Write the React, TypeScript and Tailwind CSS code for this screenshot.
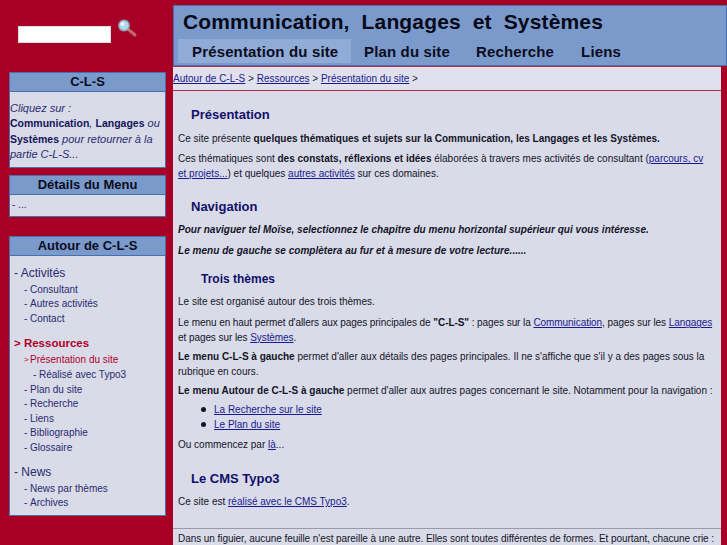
const F = "font-['Liberation_Sans',Arial,sans-serif]";

function SideBox({ title, children, className = "" }: { title: string; children: React.ReactNode; className?: string }) {
  return (
    <div className={`border border-[#4a6fae] bg-[#d9dbe8] ${className}`}>
      <div className="h-[19px] border-b border-[#4a6fae] bg-[#7a9acb] text-center text-[13px] leading-[18px] font-bold text-[#0c0c20]">{title}</div>
      {children}
    </div>
  );
}

function L1({ children, active }: { children: React.ReactNode; active?: boolean }) {
  return <div className={`mb-[2px] pl-1 leading-[16px] ${active ? "text-[11.5px] font-bold text-[#b0002a]" : "text-[12px] text-[#2a2a70]"}`}>{active ? ">" : "-"} {children}</div>;
}
function L2({ children, active, nested }: { children: React.ReactNode; active?: boolean; nested?: boolean }) {
  return (
    <div className={`flex text-[10px] leading-[14.6px] ${nested ? "pl-[23px]" : "pl-[14px]"} ${active ? "text-[#b0002a]" : "text-[#2a2a70]"}`}>
      <span className={`w-[6px] shrink-0 ${active ? "text-[8px]" : ""}`}>{active ? ">" : "-"}</span>
      <span>{children}</span>
    </div>
  );
}
function A({ children }: { children: React.ReactNode }) {
  return <a className="text-[#1a1a90] underline">{children}</a>;
}
function H({ children, className = "" }: { children: React.ReactNode; className?: string }) {
  return <h2 className={`pl-[13px] text-[13px] leading-[16px] font-bold text-[#10106a] ${className}`}>{children}</h2>;
}
function P({ children, className = "" }: { children: React.ReactNode; className?: string }) {
  return <p className={`text-[10px] leading-[14.4px] text-[#141428] ${className}`}>{children}</p>;
}
function Li({ children }: { children: React.ReactNode }) {
  return (
    <li className="flex h-[15px] items-center pl-[23px]">
      <span className="mr-[8px] h-[5px] w-[5px] shrink-0 rounded-full bg-[#141428]" />
      <span>{children}</span>
    </li>
  );
}

export default function App() {
  return (
    <div className={`${F} flex h-[545px] w-[727px] overflow-hidden bg-[#a80024]`}>
      <aside className="flex w-[173px] shrink-0 flex-col pt-[17px] pl-[9px] pr-[7px]">
        <div className="relative h-[55px]">
          <div className="ml-[9px] mt-[9px] h-[17px] w-[93px] border border-[#d9dbe8] bg-white" />
          <svg className="absolute left-[108px] top-[2px]" width="22" height="20" viewBox="0 0 22 20">
            <path d="M11.5 10.5 L18 16" stroke="#c06a70" strokeWidth="3" strokeLinecap="round" />
            <circle cx="7" cy="6.5" r="5.2" fill="#b4d6ea" stroke="#8aa8c6" strokeWidth="1.4" />
            <circle cx="5.5" cy="5" r="2" fill="#eef7fd" />
          </svg>
        </div>
        <SideBox title="C-L-S">
          <div className="pt-[9px] pb-[4px] text-[11px] leading-[15.4px] whitespace-nowrap text-[#2a2a70] italic">
            Cliquez sur :<br />
            <b className="text-[10.5px] not-italic text-[#14145a]">Communication</b>, <b className="text-[10.5px] not-italic text-[#14145a]">Langages</b> ou<br />
            <b className="text-[10.5px] not-italic text-[#14145a]">Systèmes</b> pour retourner à la<br />
            partie C-L-S...
          </div>
        </SideBox>
        <SideBox title="Détails du Menu" className="mt-[7px]">
          <div className="h-[21px] px-[2px] pt-[2px] text-[10px] leading-[15px] text-[#2a2a70]">- ...</div>
        </SideBox>
        <SideBox title="Autour de C-L-S" className="mt-[19px]">
          <div className="pt-[9px] pb-[4px]">
            <L1>Activités</L1>
            <L2>Consultant</L2>
            <L2>Autres activités</L2>
            <L2>Contact</L2>
            <div className="h-[9px]" />
            <L1 active>Ressources</L1>
            <L2 active>Présentation du site</L2>
            <L2 nested>Réalisé avec Typo3</L2>
            <L2>Plan du site</L2>
            <L2>Recherche</L2>
            <L2>Liens</L2>
            <L2>Bibliographie</L2>
            <L2>Glossaire</L2>
            <div className="h-[8px]" />
            <L1>News</L1>
            <L2>News par thèmes</L2>
            <L2>Archives</L2>
          </div>
        </SideBox>
      </aside>
      <main className="flex min-w-0 flex-1 flex-col pt-[5px]">
        <header className="h-[61px] border border-[#4a6fae] bg-[#7a9acb] pl-[4px]">
          <div className="h-[32px] pl-[5px] pt-[2px] text-[21px] leading-[28px] font-bold tracking-[0.15px] whitespace-pre text-[#080818]">Communication,  Langages  et  Systèmes</div>
          <nav className="flex h-[25px] pt-px text-[15px] leading-[25px] font-bold tracking-[0.15px] text-[#0c0c20]">
            <div className="w-[173px] bg-[#8fabd6] pl-[14px]">Présentation du site</div>
            <div className="ml-[13px]">Plan du site</div>
            <div className="ml-[26px]">Recherche</div>
            <div className="ml-[27px]">Liens</div>
          </nav>
        </header>
        <div className="mr-[6px] h-[25px] border-y border-[#b03050] bg-[#e0e1ec] text-[10px] leading-[23px] text-[#222240]">
          <A>Autour de C-L-S</A> &gt; <A>Ressources</A> &gt; <A>Présentation du site</A> &gt;
        </div>
        <div className="mr-[6px] h-[437px] bg-[#d9dbe8] pl-[5px] pr-[4px] pt-[16px]">
          <H>Présentation</H>
          <P className="mt-[9px]">Ce site présente <b>quelques thématiques et sujets sur la Communication, les Langages et les Systèmes.</b></P>
          <P className="mt-[6px]">Ces thématiques sont <b>des constats, réflexions et idées</b> élaborées à travers mes activités de consultant (<A>parcours, cv<br />et projets...</A>) et quelques <A>autres activités</A> sur ces domaines.</P>
          <H className="mt-[18px]">Navigation</H>
          <P className="mt-[8px] font-bold tracking-[0.03px] italic">Pour naviguer tel Moïse, selectionnez le chapitre du menu horizontal supérieur qui vous intéresse.</P>
          <P className="mt-[6px] font-bold tracking-[0.03px] italic">Le menu de gauche se complètera au fur et à mesure de votre lecture......</P>
          <h3 className="mt-[13px] pl-[23px] text-[12px] leading-[16px] font-bold text-[#10106a]">Trois thèmes</h3>
          <P className="mt-[8px]">Le site est organisé autour des trois thèmes.</P>
          <P className="mt-[7px] tracking-[-0.07px] whitespace-nowrap">Le menu en haut permet d'allers aux pages principales de <b>"C-L-S"</b> : pages sur la <A>Communication</A>, pages sur les <A>Langages</A><br />et pages sur les <A>Systèmes</A>.</P>
          <P className="mt-[5px]"><b>Le menu C-L-S à gauche</b> permet d'aller aux détails des pages principales. Il ne s'affiche que s'il y a des pages sous la rubrique en cours.</P>
          <P className="mt-[5px]"><b>Le menu Autour de C-L-S à gauche</b> permet d'aller aux autres pages concernant le site. Notamment pour la navigation :</P>
          <ul className="mt-[4px] text-[10px] leading-[15px]">
            <Li><A>La Recherche sur le site</A></Li>
            <Li><A>Le Plan du site</A></Li>
          </ul>
          <P className="mt-[6px]">Ou commencez par <A>là</A>...</P>
          <H className="mt-[18px]">Le CMS Typo3</H>
          <P className="mt-[8px]">Ce site est <A>réalisé avec le CMS Typo3</A>.</P>
        </div>
        <div className="mr-[6px] flex-1 overflow-hidden border-t border-[#9a9aa6] bg-[#d9dbe8] pl-[5px] pt-[3px] text-[10px] leading-[14px] tracking-[-0.06px] whitespace-nowrap text-[#141428]">
          Dans un figuier, aucune feuille n'est pareille à une autre. Elles sont toutes différentes de formes. Et pourtant, chacune crie :
        </div>
      </main>
    </div>
  );
}
